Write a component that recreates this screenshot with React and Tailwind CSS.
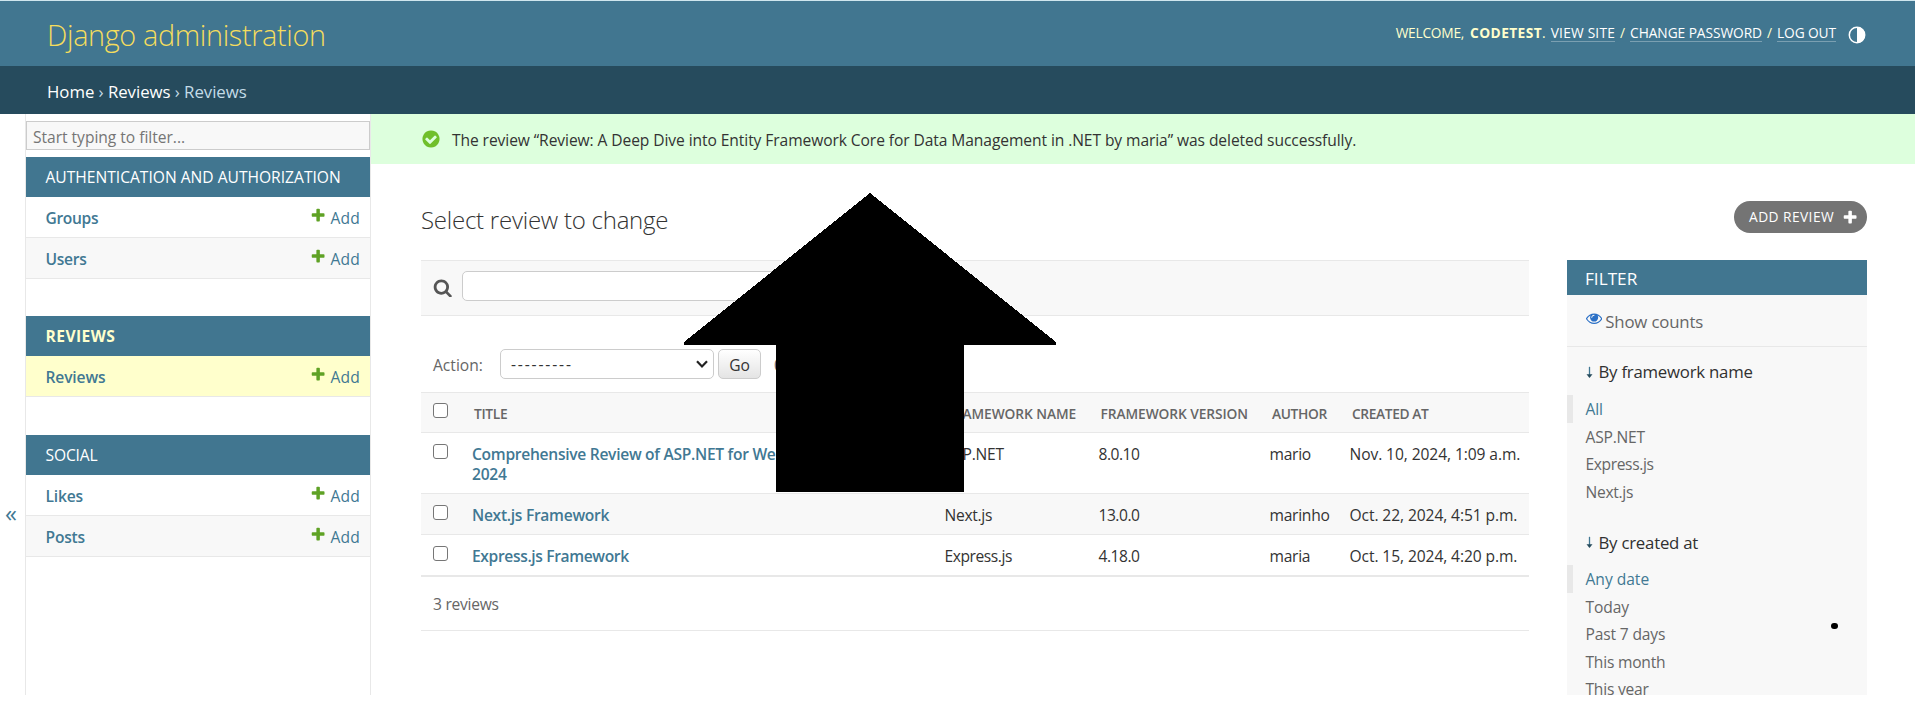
const PLUS =
  "M1600 796v192q0 40-28 68t-68 28h-416v416q0 40-28 68t-68 28h-192q-40 0-68-28t-28-68v-416h-416q-40 0-68-28t-28-68v-192q0-40 28-68t68-28h416v-416q0-40 28-68t68-28h192q40 0 68 28t28 68v416h416q40 0 68 28t28 68z";
const SEARCH =
  "M1216 832q0-185-131.5-316.5t-316.5-131.5-316.5 131.5-131.5 316.5 131.5 316.5 316.5 131.5 316.5-131.5 131.5-316.5zm512 832q0 52-38 90t-90 38q-54 0-90-38l-343-342q-179 124-399 124-143 0-273.5-55.5t-225-150-150-225-55.5-273.5 55.5-273.5 150-225 225-150 273.5-55.5 273.5 55.5 225 150 150 225 55.5 273.5q0 220-124 399l343 343q37 37 37 90z";
const CHECK =
  "M1412 734q0-28-18-46l-91-90q-19-19-45-19t-45 19l-408 407-226-226q-19-19-45-19t-45 19l-91 90q-18 18-18 46 0 27 18 45l362 362q19 19 45 19 27 0 46-19l543-543q18-18 18-45zm252 162q0 209-103 385.5t-279.5 279.5-385.5 103-385.5-103-279.5-279.5-103-385.5 103-385.5 279.5-279.5 385.5-103 385.5 103 279.5 279.5 103 385.5z";
const EYE =
  "M1664 960q-152-236-381-353 61 104 61 225 0 185-131.5 316.5t-316.5 131.5-316.5-131.5-131.5-316.5q0-121 61-225-229 117-381 353 133 205 333.5 326.5t434.5 121.5 434.5-121.5 333.5-326.5zm-720-384q0-20-14-34t-34-14q-125 0-214.5 89.5t-89.5 214.5q0 20 14 34t34 14 34-14 14-34q0-86 61-147t147-61q20 0 34-14t14-34zm848 384q0 34-20 69-140 230-376.5 368.5t-499.5 138.5-499.5-139-376.5-368q-20-35-20-69t20-69q140-229 376.5-368t499.5-139 499.5 139 376.5 368q20 35 20 69z";

function Icon({ d, className }) {
  return (
    <svg viewBox="0 0 1792 1792" className={`shrink-0 fill-current ${className}`} aria-hidden="true">
      <path d={d} />
    </svg>
  );
}

function Checkbox() {
  return (
    <input
      type="checkbox"
      className="block size-[15px] shrink-0 appearance-none rounded-[3px] border border-[#767676] bg-white"
    />
  );
}

function Header() {
  const link = "border-b border-white/30 text-white leading-[16px]";
  return (
    <header className="flex h-[66px] items-center justify-between border-t border-[#cfe6ee] bg-[#417690] pr-[49px] pl-[47px]">
      <h1 className="pt-[2px] text-[28.8px] leading-[40px] font-light tracking-[-0.34px] text-[#f5dd5d]">
        Django administration
      </h1>
      <div className="flex items-center pb-[2px] text-[13.75px] leading-[16px] text-[#ffffcc]">
        <span className="tracking-[-0.25px]">WELCOME,</span>
        <strong className="ml-[6px] font-bold tracking-[0.4px]">CODETEST</strong>
        <span className="mr-[5px]">.</span>
        <a className={`${link} mt-px tracking-[0.2px]`}>VIEW SITE</a>
        <span className="mx-[5px]">/</span>
        <a className={`${link} mt-px tracking-[-0.07px]`}>CHANGE PASSWORD</a>
        <span className="mx-[5px]">/</span>
        <a className={`${link} mt-px tracking-[-0.11px]`}>LOG OUT</a>
        <svg viewBox="0 0 18 18" className="mt-[4px] ml-[12px] size-[18px]" aria-hidden="true">
          <circle cx="9" cy="9" r="7.7" fill="none" stroke="#fff" strokeWidth="1.5" />
          <path d="M9 1a8 8 0 0 1 0 16z" fill="#fff" />
        </svg>
      </div>
    </header>
  );
}

function NavRow({ name, tone, tracking }) {
  return (
    <div className={`flex items-center justify-between border-b border-[#e8e8e8] pr-[10px] pl-[19.5px] text-[15.6px] text-[#417893] ${tone}`}>
      <span className={`pt-[4px] font-semibold ${tracking}`}>{name}</span>
      <span className="flex items-center">
        <Icon d={PLUS} className="mr-[4px] mb-[3px] size-[16.25px] text-[#5fa225]" />
        <span className="pt-[4px] tracking-[0.2px]">Add</span>
      </span>
    </div>
  );
}

function Caption({ children, className }) {
  return (
    <div className={`flex h-[40px] items-center bg-[#417690] pt-[2px] pl-[19.5px] text-[15.6px] ${className}`}>{children}</div>
  );
}

function Sidebar() {
  return (
    <nav className="flex w-[371px] shrink-0">
      <div className="flex w-[25px] justify-center pt-[383px] text-[24px] leading-[32px] text-[#417893]">
        <span className="mr-[3px]">«</span>
      </div>
      <div className="flex flex-1 flex-col border-x border-[#e8e8e8] pt-[7px]">
        <input
          placeholder="Start typing to filter..."
          className="h-[29px] w-full border border-[#ccc] bg-[#f8f8f8] px-[6px] pt-[3px] text-[15.6px] tracking-[-0.03px] placeholder:text-[#757575]"
        />
        <Caption className="mt-[7px] text-white">AUTHENTICATION AND AUTHORIZATION</Caption>
        <NavRow name="Groups" tone="h-[41px] bg-white" tracking="tracking-[-0.34px]" />
        <NavRow name="Users" tone="h-[41px] bg-[#f8f8f8]" tracking="tracking-[-0.3px]" />
        <Caption className="mt-[37px] font-bold tracking-[0.45px] text-[#ffffcc]">REVIEWS</Caption>
        <NavRow name="Reviews" tone="h-[41px] bg-[#ffffcc]" tracking="tracking-[-0.14px]" />
        <Caption className="mt-[38px] tracking-[-0.14px] text-white">SOCIAL</Caption>
        <NavRow name="Likes" tone="h-[41px] bg-white" tracking="tracking-[-0.2px]" />
        <NavRow name="Posts" tone="h-[41px] bg-[#f8f8f8]" tracking="tracking-[-0.2px]" />
      </div>
    </nav>
  );
}

const COLS = "grid grid-cols-[51px_472.5px_154px_171px_80px_1fr]";

function Row({ title, titleTracking, name, nameTracking, version, author, created, tone }) {
  return (
    <div className={`${COLS} border-b border-[#e8e8e8] pt-[11px] text-[15.6px] leading-[20px] text-[#333] ${tone}`}>
      <div className="pl-[12px]">
        <Checkbox />
      </div>
      <div className={`font-semibold text-[#417893] ${titleTracking}`}>{title}</div>
      <div className={nameTracking}>{name}</div>
      <div className="tracking-[-0.48px]">{version}</div>
      <div className="tracking-[-0.26px]">{author}</div>
      <div className="whitespace-nowrap tracking-[-0.09px]">{created}</div>
    </div>
  );
}

function Results() {
  return (
    <div className="w-[1108px] shrink-0">
      <div className="flex h-[56px] items-start border-y border-[#e8e8e8] bg-[#f8f8f8] pt-[10px] pl-[11.5px]">
        <Icon d={SEARCH} className="mt-[6.5px] size-[19.5px] text-[#555]" />
        <input className="ml-[10px] h-[30px] w-[500px] rounded-[5px] border border-[#ccc] bg-white" />
      </div>
      <div className="mt-[33px] flex h-[43px] text-[15.6px] leading-[30px] text-[#666]">
        <span className="w-[79px] pt-px pl-[12px] tracking-[0px]">Action:</span>
        <div className="flex h-[30px] w-[214px] items-center justify-between rounded-[5px] border border-[#ccc] bg-white pr-[5px] pl-[10px] text-[#333]">
          <span className="tracking-[1.85px]">---------</span>
          <svg viewBox="0 0 12 8" className="h-[8px] w-[12px]" fill="none" stroke="#222" strokeWidth="2.2" aria-hidden="true">
            <path d="M1 1.2 6 6.4 11 1.2" />
          </svg>
        </div>
        <button className="ml-[4px] h-[30px] w-[43px] rounded-[5px] border border-[#ccc] bg-linear-to-b from-white to-[#e4e4e4] pt-px leading-[28px] text-[#333]">
          Go
        </button>
        <span className="ml-[13px] pt-px">0 of 3 selected</span>
      </div>
      <div className={`${COLS} h-[41px] border-y border-[#e8e8e8] bg-[#f8f8f8] pt-[10px] text-[13.75px] leading-[20px] font-semibold text-[#666]`}>
        <div className="pl-[12px]">
          <Checkbox />
        </div>
        <div className="pt-px pl-[2px] tracking-[-0.3px]">TITLE</div>
        <div className="pt-px pl-[2px] tracking-[-0.08px]">FRAMEWORK NAME</div>
        <div className="pt-px pl-[2px] tracking-[-0.08px]">FRAMEWORK VERSION</div>
        <div className="pt-px pl-[2.5px] tracking-[-0.35px]">AUTHOR</div>
        <div className="pt-px pl-[2.5px] tracking-[-0.38px]">CREATED AT</div>
      </div>
      <Row
        title={<>Comprehensive Review of ASP.NET for Web Development in<br />2024</>}
        titleTracking="tracking-[-0.29px]"
        name="ASP.NET"
        nameTracking="tracking-[-0.22px]"
        version="8.0.10"
        author="mario"
        created="Nov. 10, 2024, 1:09 a.m."
        tone="h-[61px] bg-white"
      />
      <Row
        title="Next.js Framework"
        titleTracking="tracking-[-0.29px]"
        name="Next.js"
        nameTracking="tracking-[-0.29px]"
        version="13.0.0"
        author="marinho"
        created="Oct. 22, 2024, 4:51 p.m."
        tone="h-[41px] bg-[#f8f8f8]"
      />
      <Row
        title="Express.js Framework"
        titleTracking="tracking-[-0.36px]"
        name="Express.js"
        nameTracking="tracking-[-0.43px]"
        version="4.18.0"
        author="maria"
        created="Oct. 15, 2024, 4:20 p.m."
        tone="h-[41px] bg-white"
      />
      <div className="flex h-[55px] items-center border-y border-[#e8e8e8] pt-[2px] pl-[12px] text-[15.6px] tracking-[-0.27px] text-[#666]">
        3 reviews
      </div>
    </div>
  );
}

function FilterTitle({ children, className, tracking }) {
  return (
    <h3 className={`flex items-center pl-[19px] text-[16.8px] text-[#303030] ${className}`}>
      <svg viewBox="0 0 8 14" className="mr-[5.5px] h-[13px] w-[7px]" aria-hidden="true">
        <path d="M4 .5v9.5" stroke="#417893" strokeWidth="1.5" />
        <path d="M.6 9h6.8L4 13.4z" fill="#264b5d" />
      </svg>
      <span className={tracking}>{children}</span>
    </h3>
  );
}

function FilterList({ items }) {
  return (
    <ul className="text-[15.6px] leading-[27.5px]">
      {items.map(([label, tracking], i) => (
        <li
          key={label}
          className={`h-[27.5px] border-l-[6px] pt-px pl-[12.5px] ${tracking} ${
            i === 0 ? "border-[#e8e8e8] text-[#417893]" : "border-transparent text-[#666]"
          }`}
        >
          {label}
        </li>
      ))}
    </ul>
  );
}

function Filter() {
  return (
    <aside className="w-[300px] shrink-0 bg-[#f8f8f8]">
      <h2 className="flex h-[35px] items-center bg-[#417690] pt-[2px] pl-[18px] text-[17.2px] text-white">
        FILTER
      </h2>
      <div className="flex h-[52px] items-center border-b border-[#e8e8e8] pl-[19px] text-[16.8px] tracking-[-0.16px] text-[#666]">
        <Icon d={EYE} className="mr-[3px] mb-[5px] size-[16.25px] text-[#2b70c6]" />
        <span className="pt-[3px]">Show counts</span>
      </div>
      <FilterTitle className="h-[48px] pt-[2px]" tracking="tracking-[-0.23px]">By framework name</FilterTitle>
      <FilterList
        items={[
          ["All", "tracking-[-0.2px]"],
          ["ASP.NET", "tracking-[-0.22px]"],
          ["Express.js", "tracking-[-0.38px]"],
          ["Next.js", "tracking-[-0.3px]"],
        ]}
      />
      <FilterTitle className="mt-[15px] h-[45px]" tracking="tracking-[-0.23px]">By created at</FilterTitle>
      <FilterList
        items={[
          ["Any date", "tracking-[-0.02px]"],
          ["Today", "tracking-[-0.1px]"],
          ["Past 7 days", "tracking-[-0.16px]"],
          ["This month", "tracking-[-0.22px]"],
          ["This year", "tracking-[-0.22px]"],
        ]}
      />
    </aside>
  );
}

export default function App() {
  return (
    <div className="relative h-[701px] w-[1915px] overflow-hidden bg-white font-['Open_Sans',sans-serif]">
      <div className="flex h-[695px] flex-col overflow-hidden">
        <Header />
        <div className="flex h-[48px] shrink-0 items-center bg-[#264b5d] pt-[4px] pl-[47px] text-[16.8px] tracking-[-0.04px] whitespace-pre text-[#c4dce8]">
          <a className="text-white">Home</a> › <a className="text-white">Reviews</a> › Reviews
        </div>
        <div className="flex min-h-0 flex-1">
          <Sidebar />
          <main className="flex min-w-0 flex-1 flex-col">
            <div className="flex h-[50px] shrink-0 items-center bg-[#ddffdd] pl-[50px] text-[15.6px] tracking-[-0.085px] text-[#333]">
              <Icon d={CHECK} className="mr-[11px] size-[20px] text-[#70bf2b]" />
              <span className="pt-[4px] whitespace-nowrap">
                The review “Review: A Deep Dive into Entity Framework Core for Data Management in .NET by maria” was deleted
                successfully.
              </span>
            </div>
            <div className="flex h-[96px] shrink-0 items-start justify-between pt-[37px] pr-[48px] pl-[50px]">
              <h1 className="pt-px text-[24px] leading-[36px] font-light tracking-[-0.24px] text-[#333]">
                Select review to change
              </h1>
              <a className="flex h-[32px] w-[133px] items-center rounded-full bg-[#747474] pl-[15px] text-[13.75px] tracking-[0.44px] text-white">
                <span className="w-[86px] pt-px whitespace-nowrap">ADD REVIEW</span>
                <Icon d={PLUS} className="ml-[7px] size-[16.25px]" />
              </a>
            </div>
            <div className="flex items-start gap-[38px] pl-[50px]">
              <Results />
              <Filter />
            </div>
          </main>
        </div>
      </div>
      <svg viewBox="0 0 372 300" className="absolute top-[193px] left-[684px] h-[300px] w-[372px]" aria-hidden="true">
        <path d="M186 0 372 149v3H280V299H92V152H0v-3z" fill="#000" shapeRendering="crispEdges" />
      </svg>
      <div className="absolute top-[623px] left-[1831px] h-[6px] w-[7px] rounded-full bg-black" />
    </div>
  );
}
